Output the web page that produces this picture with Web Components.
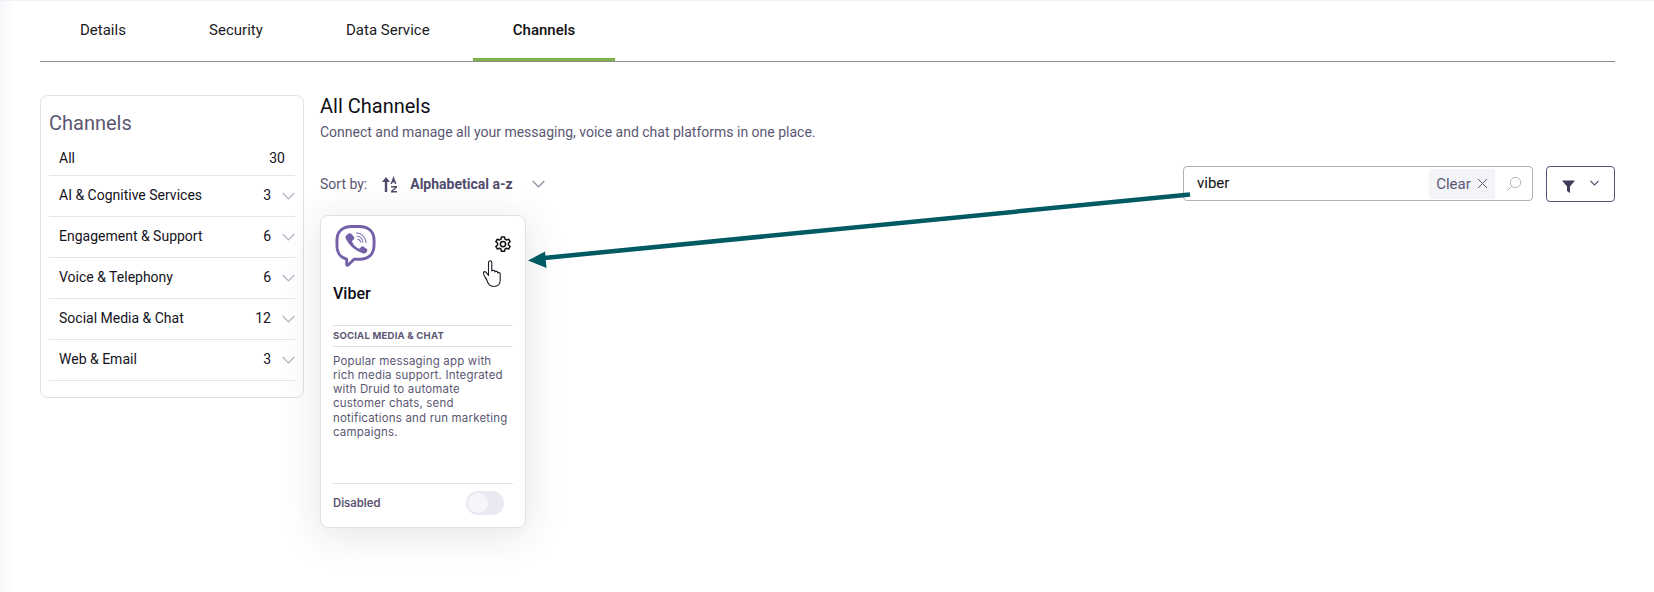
<!DOCTYPE html>
<html><head><meta charset="utf-8"><style>
html,body{margin:0;padding:0;background:#fff}
body{width:1654px;height:592px;overflow:hidden;font-family:Roboto,"Liberation Sans",sans-serif}
</style></head><body>
<app-page></app-page>
<template id="t-tabs"><style>
:host{display:flex;height:60px;border-bottom:1px solid #8c8c8c;box-sizing:content-box;font-size:15px;color:#1c1b24;gap:3.2px}
.t{padding:0 40px;display:flex;align-items:center;height:57px;margin-top:0;position:relative;white-space:nowrap}
.t.a{font-weight:500;border-bottom:3px solid #7cb342;box-sizing:content-box;color:#111}
</style><div class="t">Details</div><div class="t">Security</div><div class="t">Data Service</div><div class="t a">Channels</div></template>

<template id="t-side"><style>
:host{display:block;width:264px;height:303px;box-sizing:border-box;border:1px solid #e0e0ea;border-radius:8px;padding:0 8px;background:#fff}
h2{margin:0;font-weight:400;font-size:20px;line-height:24px;color:#5b5773;padding-top:15px;height:24px}
</style><h2>Channels</h2><div style="height:6px"></div><slot></slot></template>

<template id="t-row"><style>
:host{display:flex;align-items:center;height:41px;box-sizing:border-box;border-bottom:1px solid #e4e4ee;font-size:14px;color:#14131c;padding:0 0 2px 10px}
:host([first]){height:35px;padding:0 10px 1px 10px}
.l{flex:1}
svg{margin-left:11px;display:block;margin-top:2px}
</style><span class="l"><slot></slot></span><span id="n"></span></template>

<template id="t-card"><style>
:host{display:flex;flex-direction:column;width:206px;height:313px;box-sizing:border-box;background:#fff;border:1px solid #e0e0e6;border-radius:8px;box-shadow:0 6px 40px rgba(40,40,60,.13);padding:0 12px;position:relative}
.top{height:93px;position:relative}
.name{font-size:16px;font-weight:500;line-height:20px;color:#0d0d14;height:20px}
.logo{display:block;position:absolute;left:2px;top:8px}
.gear{position:absolute;left:161px;top:19px}
.cat{border-top:1px solid #e0e0ea;border-bottom:1px solid #e0e0ea;margin-top:0;height:20px;box-sizing:content-box;font:700 9.5px/19px Inter,sans-serif;letter-spacing:.22px;color:#5b5773;white-space:nowrap}
.desc{font:400 11.5px/14.15px Inter,sans-serif;letter-spacing:.18px;color:#5b5773;flex:1;padding-top:7px;width:182px}
.foot{border-top:1px solid #e0e0ea;height:43px;display:flex;align-items:center;justify-content:space-between;font:600 11.3px Inter,sans-serif;color:#5b5773;padding-right:9px}
.foot>span:first-child{margin-top:-6px}
.sw{width:38px;height:24px;border-radius:12px;background:#e9e9f1;position:relative;margin-top:-5px}
.k{position:absolute;left:2px;top:2px;width:20px;height:20px;border-radius:50%;background:#f5f5fa}
.head{padding-top:68px;box-sizing:border-box}
</style>
<div class="top head"><svg class="logo" width="41" height="44" viewBox="0 0 42 44" fill="none"><path d="M12 35.500C5 33.500 2 29.500 2 21V16C2 7 8 2 17 2H25C34 2 40 7 40 16V21C40 30.500 34 35.500 25 35.500H19.500L13.500 41.500C12.800 42.200 12 41.700 12 41Z" stroke="#7360a8" stroke-width="3" stroke-linejoin="round"/><path d="M14.300 9.200c1-.6 2-.3 2.700.6l2.400 3c.6.8.5 1.800-.2 2.500l-1.300 1.100c-.5.4-.6 1-.3 1.600 1.400 3 3.300 5.100 6.400 6.600.6.3 1.200.2 1.600-.3l1.100-1.300c.7-.8 1.700-.9 2.600-.3l3 2.200c1 .7 1.100 1.900.4 2.900-1.100 1.500-2.600 2.300-4.300 1.700C19.400 26 14 20.500 10.800 13.700 10.100 12 11.800 10.400 14.300 9.200Z" fill="#7360a8"/><path d="M22 8.500c5.500.4 9.500 4.500 9.800 10M22.600 12c3.400.3 5.600 2.700 5.900 6M23.400 15.200c1.700.2 2.600 1.200 2.800 2.800" stroke="#8d7dbb" stroke-width="1.200" stroke-linecap="round"/></svg>
<svg class="gear" width="18" height="18" viewBox="0 0 24 24" fill="none" stroke="#111" stroke-width="2" stroke-linejoin="round"><path d="M10 2.500h4l.6 3 2 1.100 2.900-1 2 3.400-2.300 2 0 2.300 2.300 2-2 3.400-2.900-1-2 1.100-.6 3h-4l-.6-3-2-1.100-2.900 1-2-3.400 2.300-2v-2.300l-2.300-2 2-3.400 2.900 1 2-1.100z"/><circle cx="12" cy="12" r="3.500"/></svg>
<div class="name">Viber</div></div>
<div style="height:16px"></div>
<div class="cat">SOCIAL MEDIA &amp; CHAT</div>
<div class="desc">Popular messaging app with rich media support. Integrated with Druid to automate customer chats, send notifications and run marketing campaigns.</div>
<div class="foot"><span>Disabled</span><span class="sw"><span class="k"></span></span></div>
</template>

<template id="t-search"><style>
:host{display:flex;align-items:center;width:350px;height:35px;box-sizing:border-box;border:1px solid #b0b0b4;border-radius:4px;background:#fff;font-size:15px;color:#111;padding:0 10px 0 13px;align-self:flex-start}
.v{flex:1;margin-top:-1px}
.c{width:66px;height:30px;background:#f3f4f7;border-radius:2px;display:flex;align-items:center;justify-content:center;gap:6px;color:#5b5773;font-size:15px}
svg{display:block}
.s{margin-left:11px}
</style><span class="v">viber</span><span class="c">Clear<svg width="11" height="11" viewBox="0 0 11 11" stroke="#5b5773" fill="none"><path d="M1 1l9 9M10 1l-9 9"/></svg></span>
<svg class="s" width="16" height="16" viewBox="0 0 16 16" fill="none" stroke="#b4b4c0" stroke-width="1"><circle cx="9.500" cy="6.500" r="5.200"/><path d="M5.700 10.300L1 15"/></svg></template>

<template id="t-filter"><style>
:host{display:flex;align-items:center;justify-content:center;gap:15px;width:69px;height:36px;box-sizing:border-box;border:1px solid #57527a;border-radius:4px;background:#fff}
svg{display:block}
</style><svg width="13" height="13" viewBox="0 0 13 13" style="margin-top:4px"><path d="M0 .5h13L8 6.500V13L5 11V6.500z" fill="#3f3b5a"/></svg><svg width="9" height="6" viewBox="0 0 9 6" fill="none" stroke="#57527a" stroke-width="1.100" style="margin-top:-3px"><path d="M.5 1L4.500 5 8.500 1"/></svg></template>

<template id="t-page"><style>
:host{display:block;width:1654px;height:592px;position:relative;background:#fff;box-sizing:border-box;padding:0 39px 0 40px;border-top:1px solid #f0f0f6}
.edge{position:absolute;left:0;top:0;bottom:0;width:16px;background:linear-gradient(90deg,#f8f8fb,#fff)}
.body{display:flex;align-items:flex-start;margin-top:33px;position:relative}
.main{margin-left:16px;flex:1}
h1{font-weight:400;font-size:20px;line-height:24px;margin:-1px 0 0;color:#0f0e17}
p{margin:5px 0 0;font-size:14px;line-height:18px;color:#5b5773}
.sort{display:flex;align-items:center;height:36px;margin-top:25px;font-size:14px;color:#5b5773}
.sort b{font-weight:700;margin-left:13px;font-size:14px;color:#504c6b}
.sort svg{display:block}
.sp{flex:1}
.cards{margin-top:13px}
.ov{position:absolute;left:0;top:0;pointer-events:none}
tab-bar{position:relative}
</style>
<div class="edge"></div>
<tab-bar></tab-bar>
<div class="body">
<channel-side><channel-row first n="30">All</channel-row><channel-row n="3">AI &amp; Cognitive Services</channel-row><channel-row n="6">Engagement &amp; Support</channel-row><channel-row n="6">Voice &amp; Telephony</channel-row><channel-row n="12">Social Media &amp; Chat</channel-row><channel-row n="3">Web &amp; Email</channel-row></channel-side>
<div class="main">
<h1>All Channels</h1>
<p>Connect and manage all your messaging, voice and chat platforms in one place.</p>
<div class="sort"><span>Sort by:</span>
<svg style="margin-left:15px" width="15" height="17" viewBox="0 0 15 17" fill="#504c6b"><path d="M4 1L8 6H5.200V16H2.800V6H0z"/><path d="M11.500 0l3 8h-1.500l-.5-1.500h-2L10 8H8.500zM9 10h6v1.500L11 15h4v1.500H9V15l4-3.500H9z" /></svg>
<b>Alphabetical a-z</b>
<svg style="margin-left:19px" width="13" height="8" viewBox="0 0 13 8" fill="none" stroke="#8b88a0" stroke-width="1.200"><path d="M.7 1l5.800 6 5.800-6"/></svg>
<span class="sp"></span><search-box></search-box><filter-btn style="margin-left:13px"></filter-btn></div>
<div class="cards"><channel-card></channel-card></div>
</div></div>
<svg class="ov" width="1654" height="592" viewBox="0 0 1654 592" fill="none">
<path d="M1190 193.500L544 257" stroke="#005a63" stroke-width="4.500"/><path d="M528 259.500L545 250.500L546.500 267z" fill="#005a63"/>
<path d="M486 278c-1.500-3-3-5-2.500-6.500.6-1.400 2-1 3 .3l2 2.700V262c0-3 3.300-3 3.300 0v8c0-.9 3-1.100 3 0v1c0-.9 2.800-1 2.800 0v1c0-.8 2.600-.8 2.600.5v6.500c0 4.500-2.500 6.500-6.500 6.500-3.500 0-5.500-1.500-7.700-8.500z" fill="#fff" stroke="#1d1d26" stroke-width="1.100" stroke-linejoin="round"/>
</svg></template>

<script>
function mk(name,tid,init){customElements.define(name,class extends HTMLElement{constructor(){super();this.attachShadow({mode:'open'}).appendChild(document.getElementById(tid).content.cloneNode(true));}connectedCallback(){init&&init(this)}})}
mk('tab-bar','t-tabs');mk('channel-side','t-side');
mk('channel-row','t-row',function(h){var n=h.shadowRoot.getElementById('n');n.textContent=h.getAttribute('n');if(!h.hasAttribute('first')&&!h.shadowRoot.querySelector('svg')){n.insertAdjacentHTML('afterend','<svg width="13" height="8" viewBox="0 0 13 8" fill="none" stroke="#b4b3c4" stroke-width="1.2"><path d="M.7 1l5.800 6 5.800-6"/></svg>')}});
mk('channel-card','t-card');mk('search-box','t-search');mk('filter-btn','t-filter');mk('app-page','t-page');
</script>
</body></html>
